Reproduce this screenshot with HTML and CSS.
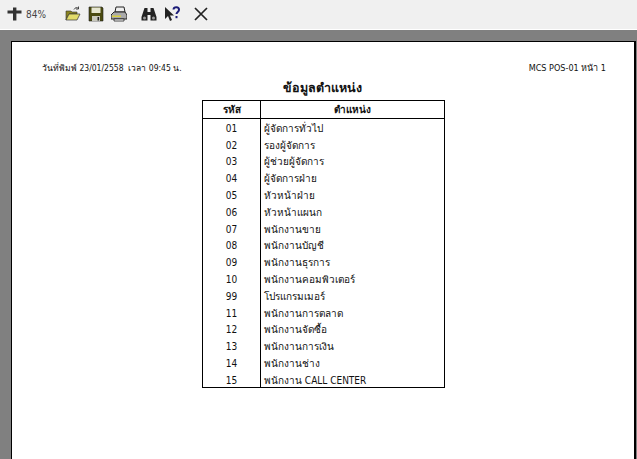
FILE: index.html
```html
<!DOCTYPE html>
<html lang="th">
<head>
<meta charset="utf-8">
<title>ข้อมูลตำแหน่ง</title>
<link rel="stylesheet" href="styles.css">
</head>
<body>
<div class="toolbar">
  <svg class="icon zoom-icon" viewBox="0 0 16 16"><path d="M7 1.500h3.400v3H15.500v3H10.400V14.500H7V7.500H1.500v-3H7z" fill="#333"/></svg>
  <span class="zoom-text">84%</span>
  <svg class="icon open" viewBox="0 0 16 16"><path d="M1 5h5l1 1h5v2H4L1 14z" fill="#8a8420" stroke="#333" stroke-width=".6"/><path d="M4 8h11l-3 6H1z" fill="#e2dc6a" stroke="#333" stroke-width=".7"/><path d="M9 3.500c1-2 3-2.500 4.500-1M13.500 0.500v2.500H11" fill="none" stroke="#333" stroke-width=".9"/></svg>
  <svg class="icon save" viewBox="0 0 16 16"><path d="M1 1h13l1 1v13H1z" fill="#4a4a10" stroke="#222" stroke-width=".6"/><path d="M3.500 1.500h9v5.500h-9z" fill="#e6e6d0"/><path d="M4 10h8v5H4z" fill="#c8c8bc"/><path d="M9.500 11h1.600v3.500H9.500z" fill="#222"/></svg>
  <svg class="icon print" viewBox="0 0 16 16"><path d="M5 1h8l1 5H4z" fill="#eee" stroke="#222" stroke-width="1"/><path d="M3 6h11l2 3v4H0V9z" fill="#aaa" stroke="#222" stroke-width="1"/><path d="M1 9.500h9v1.500H1z" fill="#d8d040"/><path d="M3 13h10v2H3z" fill="#fff" stroke="#222" stroke-width=".8"/></svg>
  <svg class="icon find" viewBox="0 0 16 16"><path d="M3.500 2h3v4H9.500V2h3l3 9v3.500H9.500V9H6.500v5.500H.5V11z" fill="#222"/><circle cx="3.500" cy="12" r="1.500" fill="#999"/><circle cx="12.500" cy="12" r="1.500" fill="#999"/></svg>
  <svg class="icon help" viewBox="0 0 16 16"><path d="M1 1v12l3-3 2 5 2-1-2-4.500h4z" fill="#222"/><path d="M9.500 3.500c.3-3 5.500-3 5.500.2 0 2.200-2.500 2.300-2.500 4.300" fill="none" stroke="#1c1c78" stroke-width="2"/><path d="M11.500 10h2v2.200h-2z" fill="#1c1c78"/></svg>
  <svg class="icon close" viewBox="0 0 16 16"><path d="M2 2l12 12M14 2L2 14" stroke="#222" stroke-width="1.700" fill="none"/></svg>
</div>
<main class="viewer">
  <section class="page">
    <header class="page-head">
      <span class="print-date">วันที่พิมพ์ 23/01/2558 &nbsp;เวลา 09:45 น.</span>
      <span class="page-no">MCS POS-01 หน้า 1</span>
    </header>
    <h1 class="title">ข้อมูลตำแหน่ง</h1>
    <table class="report">
      <thead><tr><th class="code">รหัส</th><th>ตำแหน่ง</th></tr></thead>
      <tbody>
        <tr><td class="code">01</td><td>ผู้จัดการทั่วไป</td></tr>
        <tr><td class="code">02</td><td>รองผู้จัดการ</td></tr>
        <tr><td class="code">03</td><td>ผู้ช่วยผู้จัดการ</td></tr>
        <tr><td class="code">04</td><td>ผู้จัดการฝ่าย</td></tr>
        <tr><td class="code">05</td><td>หัวหน้าฝ่าย</td></tr>
        <tr><td class="code">06</td><td>หัวหน้าแผนก</td></tr>
        <tr><td class="code">07</td><td>พนักงานขาย</td></tr>
        <tr><td class="code">08</td><td>พนักงานบัญชี</td></tr>
        <tr><td class="code">09</td><td>พนักงานธุรการ</td></tr>
        <tr><td class="code">10</td><td>พนักงานคอมพิวเตอร์</td></tr>
        <tr><td class="code">99</td><td>โปรแกรมเมอร์</td></tr>
        <tr><td class="code">11</td><td>พนักงานการตลาด</td></tr>
        <tr><td class="code">12</td><td>พนักงานจัดซื้อ</td></tr>
        <tr><td class="code">13</td><td>พนักงานการเงิน</td></tr>
        <tr><td class="code">14</td><td>พนักงานช่าง</td></tr>
        <tr><td class="code">15</td><td>พนักงาน CALL CENTER</td></tr>
      </tbody>
    </table>
  </section>
</main>
</body>
</html>
```
FILE: styles.css
```css
* { box-sizing: border-box; }
html, body { margin: 0; height: 100%; overflow: hidden; }
body {
  width: 637px;
  height: 459px;
  display: flex;
  flex-direction: column;
  font-family: "DejaVu Sans Condensed", "DejaVu Sans", "Liberation Sans", sans-serif;
  color: #111;
  background: #f0f0f0;
}
.toolbar {
  height: 29px;
  flex: none;
  display: flex;
  align-items: center;
  background: #f0f0f0;
  padding: 0 0 1px 6px;
}
.icon { display: block; flex: none; width: 16px; height: 16px; }
.zoom-text { font-size: 10px; color: #444; margin-left: 4px; width: 21px; }
.open { margin-left: 18px; }
.save { margin-left: 7px; }
.print { margin-left: 7px; }
.find { margin-left: 14px; }
.help { margin-left: 7px; }
.close { margin-left: 13px; }
.viewer {
  flex: 1;
  min-height: 0;
  border-top: 1px solid #fff;
  background: #808080;
  padding: 11px 0 0 11px;
  overflow: hidden;
}
.page {
  width: 625px;
  height: 420px;
  background: #fff;
  border: 1px solid #000;
  border-width: 1px 2px 0 1px;
  padding: 20px 28px 0 30px;
  display: flex;
  flex-direction: column;
  align-items: center;
}
.page-head {
  align-self: stretch;
  display: flex;
  justify-content: space-between;
  align-items: baseline;
  font-size: 8.5px;
  line-height: 12px;
}
.page-no { font-size: 9px; }
.title {
  margin: 5px 0 0;
  padding-right: 3px;
  font-size: 12.5px;
  line-height: 17px;
  font-weight: bold;
  text-align: center;
  height: 21px;
}
.report {
  width: 243px;
  border-collapse: collapse;
  table-layout: fixed;
  border: 1px solid #000;
  font-size: 10px;
  margin-right: 1px;
}
.report th {
  height: 18px;
  padding: 0;
  font-size: 10px;
  font-weight: bold;
  border: 1px solid #000;
  text-align: center;
}
.report td {
  height: 16.8px;
  padding: 4px 0 0 3px;
  line-height: 12px;
  text-align: left;
}
.report .code { width: 58px; padding-left: 0; text-align: center; border-right: 1px solid #000; }
```
